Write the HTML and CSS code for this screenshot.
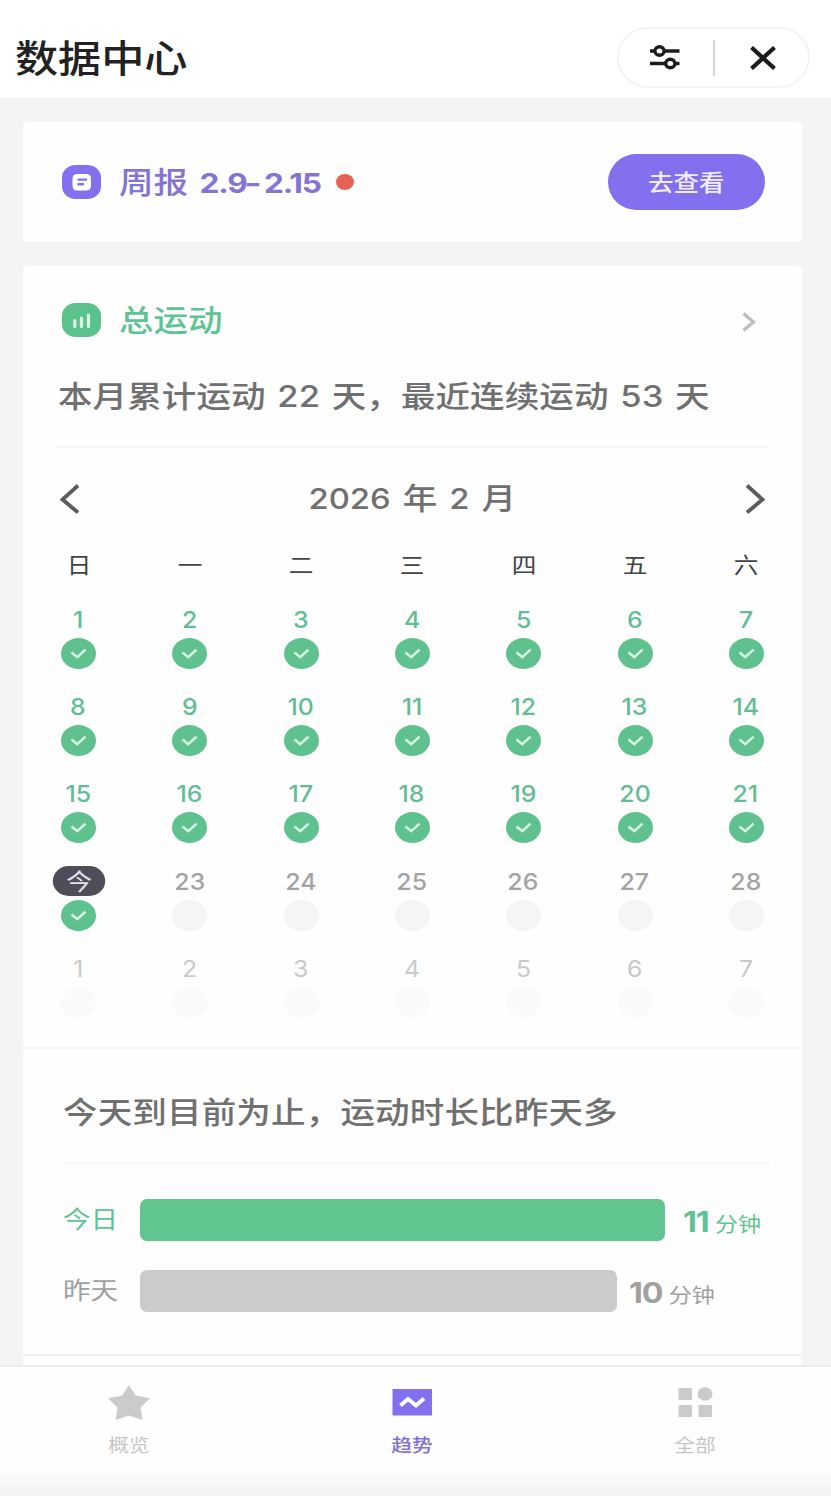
FILE: index.html
```html
<!DOCTYPE html>
<html lang="zh-CN">
<head>
<meta charset="utf-8">
<title>数据中心</title>
<link rel="stylesheet" href="styles.css">
</head>
<body>
<svg class="defs" width="0" height="0" aria-hidden="true">
  <symbol id="tick" viewBox="0 0 35 31"><path d="M10.500 14.500l5.800 4.700 8.200-7.500" fill="none" stroke="#d9f7e4" stroke-width="2.500"/></symbol>
</svg>
<div class="app">
  <header class="header">
    <h1 class="title wide">数据中心</h1>
    <div class="capsule">
      <svg class="tune" viewBox="0 0 30 25"><g fill="none" stroke="#1c1c1c" stroke-width="3.400"><path d="M0 6h5M14 6h15.500M0 18.500h15M25 18.500h4.500"/><ellipse cx="9.500" cy="6" rx="4.600" ry="4.200"/><ellipse cx="20.300" cy="18.500" rx="4.600" ry="4.200"/></g></svg>
      <span class="capsule-line"></span>
      <svg class="close" viewBox="0 0 26 24"><path d="M1.500 1.500l23 21M24.500 1.500l-23 21" stroke="#1c1c1c" stroke-width="4.200" fill="none"/></svg>
    </div>
  </header>

  <main class="content">
    <section class="card report">
      <svg class="badge" viewBox="0 0 39 34"><rect width="39" height="34" rx="13.500" ry="12.500" fill="#8370ef"/><rect x="10.500" y="9" width="18.500" height="16.500" rx="4.500" fill="#fff"/><path d="M16.500 14.600h7.500M16.500 19.200h4.500" stroke="#8370ef" stroke-width="2.400" stroke-linecap="round"/></svg>
      <span class="card-name purple wide">周报 <b class="range">2.9<span class="dash">–</span>2.15</b></span>
      <span class="dot"></span>
      <button class="view"><span class="center-wide">去查看</span></button>
    </section>

    <section class="card total">
      <div class="total-head">
        <svg class="badge" viewBox="0 0 39 34"><rect width="39" height="34" rx="13.500" ry="12.500" fill="#5cc28c"/><path d="M12.800 17.500v6M19.500 15V23.500M26.500 12v11.500" stroke="#d9f7e4" stroke-width="3.200" stroke-linecap="round"/></svg>
        <span class="card-name green wide">总运动</span>
        <svg class="more" viewBox="0 0 14 20"><path d="M1.500 1.500L11.500 10l-10 8.500" fill="none" stroke="#bdbdbd" stroke-width="3.200"/></svg>
      </div>
      <p class="summary"><span class="wide">本月累计运动 22 天，最近连续运动 53 天</span></p>

      <div class="month">
        <svg class="arrow" viewBox="0 0 20 30"><path d="M18 1.500L2.500 15.500 18 28.500" fill="none" stroke="#5c5c5c" stroke-width="3.800"/></svg>
        <span class="month-name center-wide"><span class="digits">2026</span> 年 <span class="digits">2</span> 月</span>
        <svg class="arrow" viewBox="0 0 20 30"><path d="M2 1.500L17.500 15.500 2 28.500" fill="none" stroke="#5c5c5c" stroke-width="3.800"/></svg>
      </div>
      <div class="weekdays"><span>日</span><span>一</span><span>二</span><span>三</span><span>四</span><span>五</span><span>六</span></div>
      <div class="days" id="days"></div>

      <div class="compare">
        <p class="compare-title"><span class="wide">今天到目前为止，运动时长比昨天多</span></p>
        <div class="bar-row green">
          <span class="bar-label"><span class="wide">今日</span></span>
          <span class="bar bar-today"></span>
          <span class="bar-value wide"><b>11</b> 分钟</span>
        </div>
        <div class="bar-row gray">
          <span class="bar-label"><span class="wide">昨天</span></span>
          <span class="bar bar-yesterday"></span>
          <span class="bar-value wide"><b>10</b> 分钟</span>
        </div>
      </div>
      <div class="next"></div>
    </section>
  </main>

  <nav class="tabs">
    <div class="tab">
      <svg class="tab-icon" viewBox="0 0 42 36"><path d="M21 0l6.800 10.500L42 13.300 32.500 22.600 34.500 35 21 30.600 7.600 35l1.900-12.400L0 13.300l14.200-2.800z" fill="#cbcbcb"/></svg>
      <span class="center-wide">概览</span>
    </div>
    <div class="tab active">
      <svg class="tab-icon" viewBox="0 0 42 36"><rect x="1.500" y="4" width="39.500" height="26.500" fill="#8370ef"/><path d="M9.500 20.500l7.500-6.500 8 6.500 8-7" fill="none" stroke="#fff" stroke-width="4"/></svg>
      <span class="center-wide">趋势</span>
    </div>
    <div class="tab">
      <svg class="tab-icon" viewBox="0 0 42 36"><g fill="#cbcbcb"><rect x="4.500" y="3" width="13.500" height="12" rx="1"/><ellipse cx="31" cy="9" rx="7.500" ry="6.800"/><rect x="4.500" y="20" width="13.500" height="12" rx="1"/><rect x="24.500" y="20" width="13.500" height="12" rx="1"/></g></svg>
      <span class="center-wide">全部</span>
    </div>
  </nav>
</div>
<script src="calendar.js"></script>
</body>
</html>
```

FILE: styles.css
```css
* { box-sizing: border-box; }
body {
  margin: 0;
  overflow: hidden;
  background: #f4f4f4;
  color: #666;
  font-family: Inter, "Noto Sans CJK SC", sans-serif;
}
h1, p { margin: 0; }
svg { display: block; flex: none; }
.defs { position: absolute; }
.app { width: 831px; height: 1496px; display: flex; flex-direction: column; overflow: hidden; }

.wide, .center-wide { display: inline-block; white-space: nowrap; transform: scaleX(1.15); }
.wide { transform-origin: left center; }

.header {
  height: 98px;
  flex: none;
  padding: 17px 21px 0 15px;
  display: flex;
  align-items: center;
  justify-content: space-between;
  background: #fff;
}
.title { padding-top: 2px; font-size: 37.500px; line-height: 50px; font-weight: 500; color: #222; }
.capsule {
  width: 193px;
  height: 61px;
  border: 2px solid #f3f3f3;
  border-radius: 31px;
  display: flex;
  align-items: center;
  padding-left: 31px;
}
.tune { width: 30px; height: 25px; }
.capsule-line { width: 2px; height: 36px; margin: 0 35px 0 33px; background: #d4d4d4; }
.close { width: 26px; height: 24px; }

.content { flex: 1; min-height: 0; overflow: hidden; padding: 24px 29px 0 23px; }
.card { background: #fefefe; border-radius: 4px; }
.report { height: 120px; display: flex; align-items: center; padding: 0 37px 0 39px; }
.badge { width: 39px; height: 34px; }
.card-name { margin-left: 18px; font-size: 30px; line-height: 44px; font-weight: 500; }
.purple { color: #8474d4; }
.green { color: #5fc493; }
.gray { color: #a0a0a0; }
.range { margin-left: 2px; font-size: 27.500px; font-weight: 700; letter-spacing: -1px; }
.dash { display: inline-block; width: 15px; transform: scaleX(.78); transform-origin: left center; }
.dot { width: 18px; height: 16px; margin-left: 41px; border-radius: 50%; background: #e66254; }
.view {
  width: 157px;
  height: 56px;
  margin-left: auto;
  padding: 0;
  border: 0;
  border-radius: 28px;
  background: #8370ef;
  color: #f1eeff;
  font: 500 22.200px/57px Inter, "Noto Sans CJK SC", sans-serif;
}

.total { margin-top: 24px; padding-top: 33px; }
.total-head { height: 44px; display: flex; align-items: center; padding: 0 46px 2px 39px; }
.more { width: 14px; height: 20px; margin: 3px 0 0 auto; }
.summary {
  height: 105px;
  margin: 0 34px;
  padding: 28px 0 0 1px;
  border-bottom: 2px solid #f6f6f6;
  font-size: 30px;
  line-height: 50px;
  font-weight: 500;
  word-spacing: 2px;
  letter-spacing: .1px;
  color: #707070;
}
.month { height: 100px; display: flex; align-items: center; justify-content: space-between; padding: 0 37px; }
.month-name { font-size: 30px; line-height: 50px; font-weight: 500; word-spacing: 2.500px; color: #707070; }
.digits { font-size: 28.500px; }
.arrow { width: 20px; height: 30px; margin-top: 2px; }
.weekdays, .days { display: grid; grid-template-columns: repeat(7, 1fr); justify-items: center; }
.weekdays { font-size: 22px; line-height: 34px; color: #444; }
.weekdays span { transform: scaleX(1.12); }
.days { margin-top: 21.500px; grid-auto-rows: 87.400px; }
.day { display: flex; flex-direction: column; align-items: center; gap: 2px; color: #62bd94; }
.num { font-size: 23px; line-height: 32px; font-weight: 500; transform: translateX(-.5px) scaleX(1.08); }
.mark { width: 35px; height: 31px; border-radius: 50%; background: #5fc28e; }
.pending { color: #a3a3a3; }
.pending .mark { background: #f5f5f5; }
.later { color: #c9c9c9; }
.later .num { font-weight: 400; }
.later .mark { background: #fafafa; }
.today .num {
  width: 46px;
  height: 30px;
  margin-bottom: 2px;
  border-radius: 14px / 15px;
  background: #504d5b;
  color: #e4e1ea;
  line-height: 32px;
  text-align: center;
  font-weight: 400;
  transform: scaleX(1.14);
}

.compare { margin-top: 6.500px; height: 307px; border-top: 2px solid #f5f5f5; padding: 0 33px 0 41px; }
.compare-title {
  height: 115px;
  margin-bottom: 35px;
  padding-top: 38px;
  border-bottom: 2px solid #f7f7f7;
  font-size: 30px;
  line-height: 50px;
  font-weight: 500;
  letter-spacing: .15px;
  color: #707070;
}
.compare-title .wide, .bar-label .wide { margin-left: -1px; }
.bar-row { display: flex; align-items: center; height: 42px; margin-bottom: 29px; }
.bar-label { width: 76px; font-size: 24px; line-height: 44px; }
.bar { height: 42px; border-radius: 7px; }
.bar-today { width: 525px; background: #60c58f; }
.bar-yesterday { width: 477px; background: #cbcbcb; }
.bar-value { margin: 7px 0 0 18px; font-size: 20px; line-height: 42px; }
.gray .bar-value { margin-left: 12px; }
.bar-value b { font-size: 28px; font-weight: 700; letter-spacing: -1px; }
.next { height: 40px; border-top: 2px solid #f0f0f0; }

.tabs {
  height: 131px;
  flex: none;
  display: grid;
  grid-template-columns: repeat(3, 283px);
  justify-content: center;
  padding-right: 8px;
  border-top: 2px solid #ececec;
  background: linear-gradient(#fefefe 0 102px, #f4f4f4 122px);
}
.tab {
  display: flex;
  flex-direction: column;
  align-items: center;
  gap: 11px;
  padding-top: 18px;
  font-size: 18px;
  line-height: 28px;
  color: #c6c6c6;
}
.active { color: #8370cf; font-weight: 500; }
.tab-icon { width: 42px; height: 36px; }
```

FILE: calendar.js
```js
const days = document.getElementById('days');
for (let i = 1; i <= 35; i++) {
  const cell = document.createElement('div');
  const label = i === 22 ? '今' : i > 28 ? i - 28 : i;
  const state = i === 22 ? ' today' : i > 28 ? ' later' : i > 22 ? ' pending' : '';
  const tick = i <= 22 ? '<use href="#tick"/>' : '';
  cell.className = 'day' + state;
  cell.innerHTML = `<span class="num">${label}</span><svg class="mark" viewBox="0 0 35 31">${tick}</svg>`;
  days.appendChild(cell);
}
```
